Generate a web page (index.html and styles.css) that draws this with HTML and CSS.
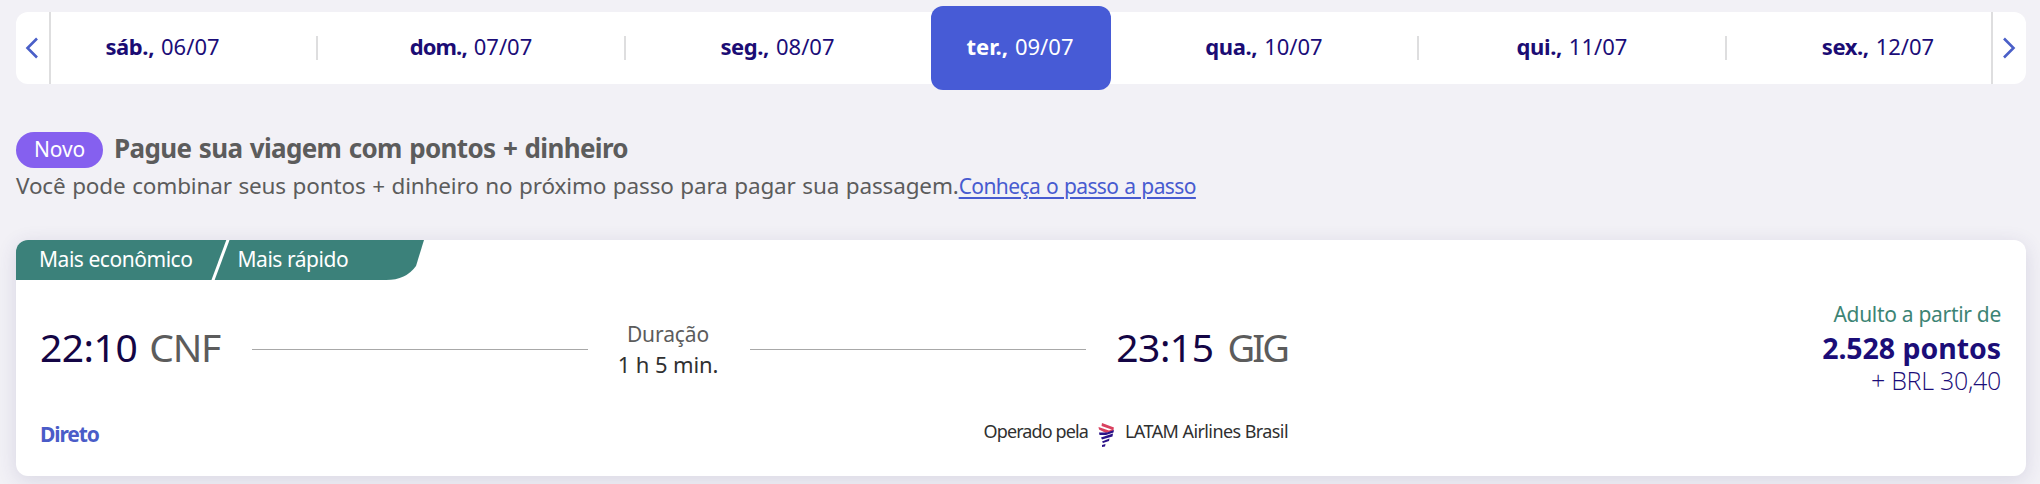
FILE: index.html
```
<!DOCTYPE html>
<html lang="pt-BR">
<head>
<meta charset="utf-8">
<title>Voos CNF – GIG</title>
<link rel="stylesheet" href="styles.css">
</head>
<body>
<nav class="dates">
  <button class="arrow arrow-prev" aria-label="Anterior"><svg width="14" height="22" viewBox="0 0 14 22"><path d="M12 1.500 2.500 11 12 20.500"/></svg></button>
  <a class="date date-first"><b>sáb.,</b><span>06/07</span></a>
  <a class="date"><b class="tight">dom.,</b><span>07/07</span></a>
  <a class="date date-edge"><b>seg.,</b><span>08/07</span></a>
  <a class="date date-active"><b>ter.,</b><span>09/07</span></a>
  <a class="date"><b>qua.,</b><span>10/07</span></a>
  <a class="date"><b>qui.,</b><span>11/07</span></a>
  <a class="date date-last"><b>sex.,</b><span>12/07</span></a>
  <button class="arrow arrow-next" aria-label="Próximo"><svg width="14" height="22" viewBox="0 0 14 22"><path d="M2 1.500 11.500 11 2 20.500"/></svg></button>
</nav>

<section class="promo">
  <div class="promo-head"><span class="pill">Novo</span><h2>Pague sua viagem com pontos + dinheiro</h2></div>
  <p class="promo-text"><span>Você pode combinar seus pontos + dinheiro no próximo passo para pagar sua passagem.</span><a class="promo-link">Conheça o passo a passo</a></p>
</section>

<article class="card">
  <div class="tags">
    <svg class="tags-shape" width="408" height="40" viewBox="0 0 408 40"><path class="tag-fill" d="M0 0H408L400 26Q390 40 370 40H0Z"/><path class="tag-slash" d="M212.300 -1 196.700 41"/></svg>
    <span class="tag tag-a">Mais econômico</span><span class="tag">Mais rápido</span>
  </div>
  <div class="card-body">
    <div class="flight">
      <div class="route">
        <div class="stop"><span class="time">22:10</span><span class="code">CNF</span></div>
        <i class="line"></i>
        <div class="duration"><span class="duration-label">Duração</span><span class="duration-value">1 h 5 min.</span></div>
        <i class="line"></i>
        <div class="stop stop-end"><span class="time">23:15</span><span class="code code-end">GIG</span></div>
      </div>
      <div class="details">
        <a class="direct">Direto</a>
        <div class="operator"><span class="operator-label">Operado pela</span>
          <svg class="logo" width="17" height="24" viewBox="0 0 17 24">
            <g class="logo-red"><path d="M4 0 16 4.500 15 7 3.500 3Z"/><path d="M.500 4 11 7.500 16 5.500 14.500 8.500 8 10 1 6.500Z"/></g>
            <g class="logo-blue"><path d="M1 9.500 9 9.500 16 7 15.500 9.500 8 12 1.500 12Z"/><path d="M3 14.500 15 10.500 14.500 13.500 4 16.500Z"/><path d="M4 18.500 11.500 15.500 11 18 5 20Z"/><path d="M4 22 7.500 21 7 23.500 4 24Z"/></g>
          </svg><span class="operator-name">LATAM Airlines Brasil</span></div>
      </div>
    </div>
    <div class="price"><span class="price-label">Adulto a partir de</span><strong class="points">2.528 pontos</strong><span class="cash">+ BRL 30,40</span></div>
  </div>
</article>
</body>
</html>
```
FILE: styles.css
```
* { box-sizing: border-box; }
body { margin: 0; padding: 12px 14px 0 16px; height: 484px; overflow: hidden; background: #f2f1f6; font-family: "Noto Sans", "Open Sans", sans-serif; color: #5c5c5c; }
b, strong { font-weight: 700; }
span, h2, a { white-space: nowrap; }

.dates { display: flex; height: 72px; background: #fff; border-radius: 12px; }
.arrow { width: 35px; padding: 0 2px 0 0; border: 0 solid #dededf; background: none; display: flex; align-items: center; justify-content: center; flex: none; }
.arrow-prev { border-right-width: 2px; }
.arrow-next { border-left-width: 2px; }
.arrow svg { fill: none; stroke: #4a5fc8; stroke-width: 2.600; }
.date { position: relative; display: flex; flex: none; width: 308px; align-items: center; justify-content: center; gap: 7px; padding: 0 2px 4px 0; font-size: 22px; line-height: 30px; color: #1b0d78; }
.date b { color: #1b0c74; letter-spacing: -.4px; }
.date .tight { letter-spacing: -.9px; }
.date::after { content: ""; position: absolute; right: 0; top: 24px; height: 24px; width: 2px; background: #dededf; }
.date-first { width: 267px; padding-right: 44px; }
.date-edge { width: 305px; }
.date-last { flex: 1; padding-left: 40px; }
.date-edge::after, .date-active::after, .date-last::after { display: none; }
.date-active, .date-active b { color: #fff; letter-spacing: 0; }
.date-active { width: 180px; margin: -6px 0; background: #475bd6; border-radius: 12px; }

.promo { margin-top: 48px; }
.promo-head { display: flex; align-items: center; gap: 11px; height: 36px; }
.pill { width: 87px; height: 36px; padding-top: 2px; text-align: center; border-radius: 18px; background: #8560ef; color: #fff; font-size: 21px; line-height: 30px; letter-spacing: -.2px; }
h2 { margin: -4px 0 0; font-size: 26px; line-height: 32px; font-weight: 700; letter-spacing: -.65px; word-spacing: 1.300px; }
.promo-text { display: flex; margin: 1px 0 0; font-size: 22.500px; line-height: 34px; letter-spacing: -.15px; word-spacing: .900px; }
.promo-link { font-size: 21px; letter-spacing: -.6px; word-spacing: 1px; color: #475bd0; text-decoration: underline; text-decoration-thickness: 2px; text-underline-offset: 3px; }

.card { margin-top: 37px; height: 236px; background: #fff; border-radius: 12px; box-shadow: 0 4px 20px rgba(60, 50, 110, .14); overflow: hidden; }
.tags { position: relative; display: flex; height: 40px; padding: 3px 0 0 23px; color: #fff; font-size: 21px; line-height: 32px; letter-spacing: -.46px; }
.tags-shape { position: absolute; left: 0; top: 0; }
.tag-fill { fill: #3b817a; }
.tag-slash { stroke: #fff; stroke-width: 3; }
.tag { position: relative; }
.tag-a { margin-right: 45px; }
.card-body { display: flex; justify-content: space-between; padding: 0 25px 0 24px; }
.flight { width: 1248px; }
.route { display: flex; align-items: center; height: 80px; margin-top: 29px; }
.stop { display: flex; flex: none; gap: 12px; width: 212px; padding-bottom: 4px; font-size: 39px; line-height: 54px; }
.stop-end { width: 202px; justify-content: flex-end; gap: 14px; padding-right: 1px; }
.time { color: #140545; letter-spacing: -.5px; }
.code { letter-spacing: -1.200px; }
.code-end { font-size: 38px; letter-spacing: -2.900px; }
.line { flex: none; height: 1px; width: 336px; background: #a8a8a8; }
.duration { flex: none; width: 162px; padding-right: 2px; display: flex; flex-direction: column; align-items: center; font-size: 22px; line-height: 30px; }
.duration-label { font-size: 21px; letter-spacing: -.1px; }
.duration-value { color: #303030; letter-spacing: -.1px; }
.details { display: flex; justify-content: space-between; font-size: 18px; line-height: 27px; margin-top: 29px; }
.direct { font-size: 21px; line-height: 32px; font-weight: 700; letter-spacing: -1.100px; color: #4a5cc8; }
.operator { display: flex; color: #303030; }
.operator-label { letter-spacing: -.88px; }
.operator-name { letter-spacing: -.58px; }
.logo { margin: 5px 10px 0 10px; }
.logo-red { fill: #d9415f; }
.logo-blue { fill: #2a1188; }
.price { display: flex; flex-direction: column; align-items: flex-end; margin-top: 18px; color: #1b0d78; }
.price-label { font-size: 21px; line-height: 32px; letter-spacing: -.3px; color: #3d8474; }
.points { font-size: 28.500px; line-height: 36px; letter-spacing: -.05px; }
.cash { font-family: "Open Sans", "Noto Sans", sans-serif; font-weight: 300; font-size: 25px; line-height: 30px; letter-spacing: -.28px; margin-top: -1px; }
```
